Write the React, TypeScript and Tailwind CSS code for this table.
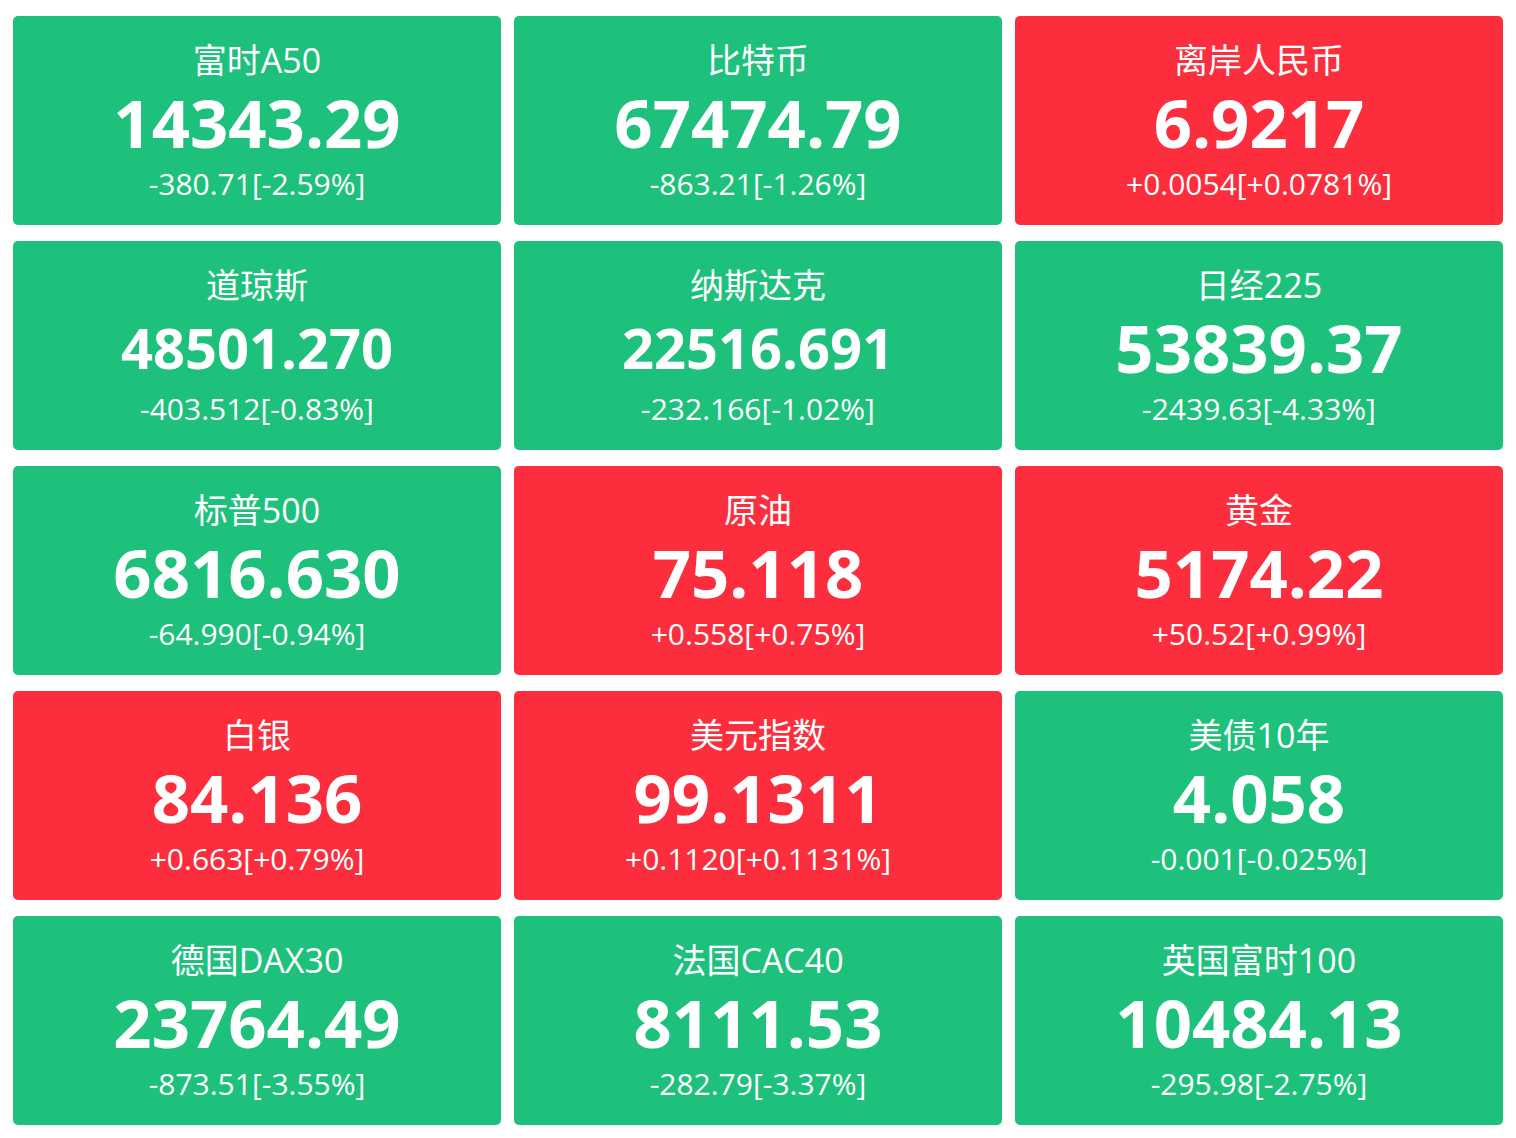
const items = [
  { name: "富时A50", price: "14343.29", change: "-380.71[-2.59%]" },
  { name: "比特币", price: "67474.79", change: "-863.21[-1.26%]" },
  { name: "离岸人民币", price: "6.9217", change: "+0.0054[+0.0781%]" },
  { name: "道琼斯", price: "48501.270", change: "-403.512[-0.83%]" },
  { name: "纳斯达克", price: "22516.691", change: "-232.166[-1.02%]" },
  { name: "日经225", price: "53839.37", change: "-2439.63[-4.33%]" },
  { name: "标普500", price: "6816.630", change: "-64.990[-0.94%]" },
  { name: "原油", price: "75.118", change: "+0.558[+0.75%]" },
  { name: "黄金", price: "5174.22", change: "+50.52[+0.99%]" },
  { name: "白银", price: "84.136", change: "+0.663[+0.79%]" },
  { name: "美元指数", price: "99.1311", change: "+0.1120[+0.1131%]" },
  { name: "美债10年", price: "4.058", change: "-0.001[-0.025%]" },
  { name: "德国DAX30", price: "23764.49", change: "-873.51[-3.55%]" },
  { name: "法国CAC40", price: "8111.53", change: "-282.79[-3.37%]" },
  { name: "英国富时100", price: "10484.13", change: "-295.98[-2.75%]" },
];

function Tile({ name, price, change }: { name: string; price: string; change: string }) {
  const up = change.startsWith("+");
  // long prices get a smaller font so they fit the tile
  const long = price.length > 8;
  return (
    <div
      className={`h-[209px] rounded-[5px] text-white flex flex-col items-center pt-[22px] ${
        up ? "bg-[#fc2e3d]" : "bg-[#1ec17c]"
      }`}
    >
      <div className="text-[34px] leading-[44px]">{name}</div>
      <div className={`leading-[80px] font-bold ${long ? "text-[56px]" : "text-[67px]"}`}>{price}</div>
      <div className="text-[30px] leading-[40px] mt-[2px]">{change}</div>
    </div>
  );
}

export default function App() {
  return (
    <div
      className="min-h-screen bg-white px-[13px] pt-[16px] pb-[14px]"
      style={{ fontFamily: '"Open Sans", "Noto Sans CJK SC", sans-serif' }}
    >
      <div className="grid grid-cols-3 gap-x-[13px] gap-y-[16px]">
        {items.map((it) => (
          <Tile key={it.name} {...it} />
        ))}
      </div>
    </div>
  );
}
